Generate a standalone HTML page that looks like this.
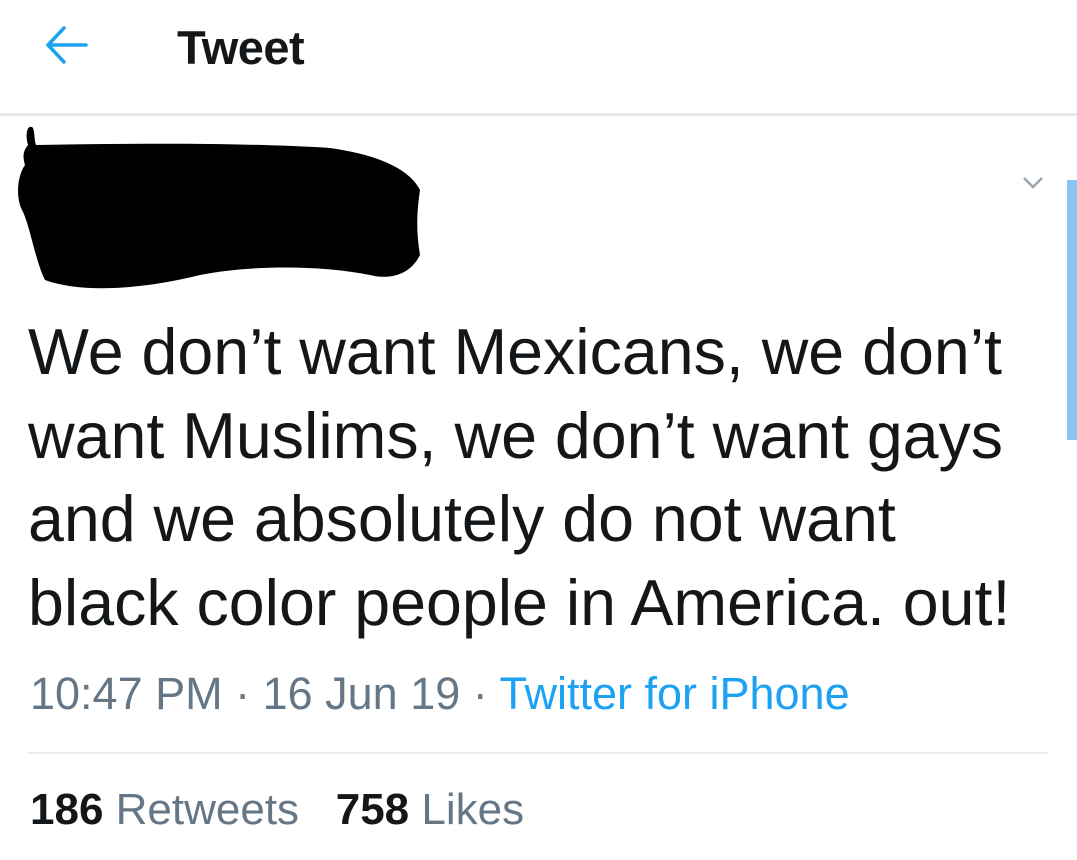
<!DOCTYPE html>
<html><head><meta charset="utf-8"><style>
html,body{margin:0;padding:0;background:#fff;width:1077px;height:860px;overflow:hidden;font-family:"Liberation Sans",Arial,sans-serif;position:relative}
.a{position:absolute;white-space:nowrap}
</style></head><body>
<svg class="a" style="left:44px;top:24px" width="46" height="42" viewBox="0 0 46 42"><path d="M20 4 L4 21 L20 38 M4 21 H42" fill="none" stroke="#1da1f2" stroke-width="3.5" stroke-linecap="round" stroke-linejoin="round"/></svg>
<div class="a" style="left:177px;top:20px;font-size:47px;font-weight:bold;color:#14171a;letter-spacing:-0.5px">Tweet</div>
<div class="a" style="left:0;top:113px;width:1077px;height:3px;background:#e6e8ea"></div>
<svg class="a" style="left:0;top:115px" width="440" height="180"><path d="M28 30 C25 20 27 10 32 12 C35 14 34 25 36 30 C150 28 250 28 330 33 C380 40 410 55 420 75 C418 90 415 110 420 140 C410 160 390 165 370 160 C320 150 250 150 200 160 C140 175 80 178 45 165 C35 145 30 110 22 95 C15 80 18 60 25 50 C22 40 24 35 28 30 Z" fill="#000"/></svg>
<svg class="a" style="left:1020px;top:174px" width="28" height="18"><path d="M4 4 L13 13 L22 4" fill="none" stroke="#9aa5b0" stroke-width="2.5"/></svg>
<div class="a" style="left:1067px;top:180px;width:10px;height:260px;background:#88c6f2"></div>
<div class="a" style="left:28px;top:311px;font-size:64.5px;line-height:83.5px;color:#14171a;white-space:nowrap">We don’t want Mexicans, we don’t<br>want Muslims, we don’t want gays<br>and we absolutely do not want<br>black color people in America. out!</div>
<div class="a" style="left:30px;top:668px;font-size:45px;color:#657786">10:47 PM · 16 Jun 19 · <span style="color:#1da1f2">Twitter for iPhone</span></div>
<div class="a" style="left:28px;top:752px;width:1020px;height:2px;background:#e6ecf0"></div>
<div class="a" style="left:30px;top:785px;font-size:44px;color:#657786"><b style="color:#14171a">186</b> Retweets&nbsp;&nbsp; <b style="color:#14171a">758</b> Likes</div>
</body></html>
